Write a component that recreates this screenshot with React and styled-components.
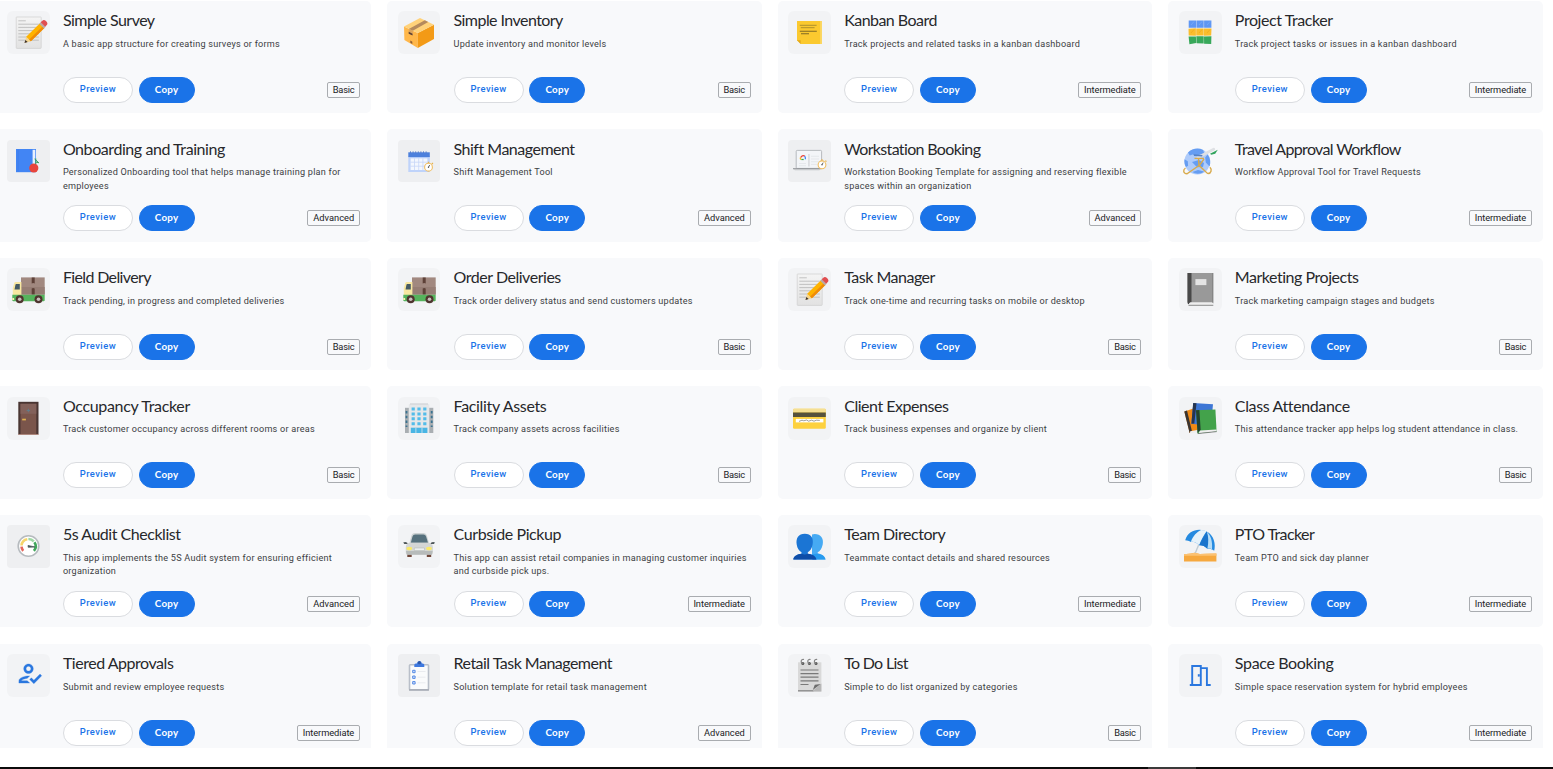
import React from "react";
import styled, { createGlobalStyle } from "styled-components";

const GlobalStyle = createGlobalStyle`
  html, body { margin: 0; padding: 0; background: #fff; overflow: hidden; }
  *, *::before, *::after { box-sizing: border-box; }
`;

const Page = styled.div`
  display: flex;
  flex-direction: column;
  width: 1553px;
  height: 769px;
  overflow: hidden;
  background: #fff;
  font-family: Roboto, "Liberation Sans", sans-serif;
  color: #202124;
`;

const Gallery = styled.main`
  height: 748px;
  overflow: hidden;
`;

const Grid = styled.div`
  display: grid;
  grid-template-columns: repeat(4, 374.6px);
  grid-auto-rows: 112.45px;
  column-gap: 16.07px;
  row-gap: 16.17px;
  margin-left: -3.7px;
  padding-top: 0.6px;
`;

const Card = styled.article`
  display: flex;
  gap: 13.1px;
  padding: 10.5px 10.9px 10px 10.8px;
  background: #f8f9fb;
  border-radius: 5px;
`;

const Tile = styled.div`
  flex: none;
  width: 42.7px;
  height: 42.7px;
  border-radius: ${(p) => (p.$tone === "flat" ? "4px" : "6px")};
  background: ${(p) => ({ soft: "#f2f3f5", flat: "#eeeff1", none: "transparent" })[p.$tone]};

  svg { display: block; width: 43px; height: 43px; }
`;

const Body = styled.div`
  flex: 1;
  min-width: 0;
  display: flex;
  flex-direction: column;
`;

const Title = styled.h3`
  margin: 0;
  height: 18px;
  font: 400 16px/17.6px Lato, "Liberation Sans", sans-serif;
  letter-spacing: ${(p) => p.$track}px;
  white-space: nowrap;
  color: #27282b;
`;

const Description = styled.p`
  margin: 8.5px 0 0;
  height: 38.95px;
  font-size: 9.1px;
  line-height: 13.4px;
  letter-spacing: 0.24px;
  color: #3c4043;
`;

const Footer = styled.div`
  display: flex;
  align-items: center;
  gap: 5.7px;
`;

const Button = styled.button`
  height: 26px;
  width: ${(p) => (p.$primary ? "56.2px" : "70px")};
  padding: 0 0 2px;
  border: 1px solid ${(p) => (p.$primary ? "#1a73e8" : "#dadce0")};
  border-radius: 13px;
  background: ${(p) => (p.$primary ? "#1a73e8" : "#fff")};
  color: ${(p) => (p.$primary ? "#fff" : "#1a73e8")};
  font: ${(p) => (p.$primary ? "700 9.8px" : "500 9.4px")}/12px ${(p) => (p.$primary ? "Lato" : "Roboto")}, sans-serif;
  letter-spacing: ${(p) => (p.$primary ? "0.3px" : "0.45px")};
`;

const Badge = styled.span`
  margin-left: auto;
  height: 16px;
  padding: 0 4.8px;
  border: 1px solid #a9acb0;
  border-radius: 2px;
  font-size: 9.3px;
  line-height: 14px;
  letter-spacing: ${(p) => p.$track}px;
  color: #202124;
`;

const BottomEdge = styled.div`
  display: flex;
  margin-top: auto;
  height: 2px;
  padding-left: 1148px;
  background: #0b0b0b;
`;

const EdgeMark = styled.span`
  width: 48px;
  background: #3a3a3a;
`;

function Stopwatch({ x, y }) {
  return (
    <g transform={`translate(${x} ${y})`}>
      <path d="M0-5.5V-4M3.4-4.2l1 1" stroke="#e8b24a" strokeWidth="1.3" />
      <circle r="3.9" fill="#fff" stroke="#efbd62" strokeWidth="1.1" />
      <path d="M0 0l1.2-2.2" stroke="#555" strokeWidth=".9" />
      <circle r=".7" fill="#555" />
    </g>
  );
}

const Note = () => (
  <>
    <defs>
      <linearGradient id="note-paper" x2="0" y2="1"><stop stopColor="#f4f4f4" /><stop offset="1" stopColor="#e2e2e2" /></linearGradient>
    </defs>
    <rect x="9.2" y="6" width="25" height="31.4" rx=".6" fill="url(#note-paper)" stroke="#cfcfcf" strokeWidth=".7" />
    <path d="M11.3 9.8h7.5" stroke="#bdbdbd" strokeWidth=".9" />
    <path d="M11.3 13.2h20.5M11.3 16.4h20.5M11.3 19.6h20.5M11.3 22.8h20.5M11.3 26h20.5M11.3 29.2h20.5" stroke="#bbb" strokeWidth=".9" />
    <path d="M17.5 32l1.7-6.3 4.6 4.5z" fill="#f6d58c" />
    <path d="M17.5 32l.8-3 2.4 2.1z" fill="#3a3230" />
    <path d="M19.2 25.7L32.7 12.4l4.7 4.5-13.5 13.3z" fill="#ffb300" />
    <path d="M22.2 28.6L35.8 15.3l1.6 1.6-13.5 13.3z" fill="#ef8b09" />
    <path d="M32.2 12.8l1.7-1.6 4.7 4.6-1.7 1.6z" fill="#b9a9a5" />
    <path d="M33.7 11.3l1.6-1.6c1.2-1.2 2.6-.7 3.9.6s1.7 2.7.6 3.8l-1.6 1.7z" fill="#e04e50" />
  </>
);

const Package = () => (
  <>
    <path d="M6 15.6L19.8 22v15L6.4 29z" fill="#ffb74a" />
    <path d="M19.8 22L36 13.8V28L19.8 37z" fill="#f39a16" />
    <path d="M6 15.6L22 6.9l14 6.9L19.8 22z" fill="#ffd27a" />
    <path d="M10.8 17.9l16-8.6 3.4 1.7-15.4 8.8z" fill="#b58a5c" />
    <path d="M10.8 17.9l4 1.9v4.4l-4-1.8z" fill="#dba45d" />
    <path d="M10.7 20.8l3.8 1.9v1.8l-3.8-1.8z" fill="#5c4033" />
    <path d="M12.3 29.6l2 1.1v2.2l-2-1.1z" fill="#8c5b37" />
  </>
);

const Sticky = () => (
  <>
    <path d="M9 10h24.8v23H12.7L9 29.3z" fill="#fbc92f" />
    <path d="M32.2 10h1.6v23h-1.6z" fill="#fcd968" />
    <path d="M9 29.3h3.7V33z" fill="#e3a91c" />
    <path d="M11.8 14.3h16.8M12.8 16.7h13.8" stroke="#a58a2c" strokeWidth=".9" />
    <path d="M11.8 20.3h17M13 22.7h8" stroke="#806a24" strokeWidth="1.1" />
  </>
);

const Blocks = () => (
  <>
    <path d="M9.7 9.6h7.3v7.2h-7.3zM17.4 9.6h7.3v7.2h-7.3zM25.1 9.6h7.3v7.2h-7.3z" fill="#5f97f3" />
    <path d="M9.5 17.7l7.4-.4v7.4l-7.2-.1zM17.2 17.6h7.5v7h-7.5zM25 17.5h7.5l-.3 7-7.2.2z" fill="#fabd2d" />
    <path d="M9.6 25.6l7.3-.2.3 6.7-6.8 1.1zM17.3 25.3h7.4v7.3l-7.1-.3zM25 25.5l7.4-.2-.2 7.7-7.1-.2z" fill="#38a85a" />
    <path d="M12 14l3-3.5M20 14l3-3.5M28 14l3-3.5" stroke="#82b0fa" strokeWidth=".6" />
    <path d="M12 22l3-3.5M20 22l3-3.5M28 22l3-3.5" stroke="#eba51b" strokeWidth=".6" />
  </>
);

const BlueBook = () => (
  <>
    <path d="M9 9h20v23.2H9z" fill="#4285f4" />
    <path d="M25.6 9.8h2.7v18h-2.7z" fill="#e8f0fe" />
    <path d="M11.2 9.5v22" stroke="#3b79e2" strokeWidth=".5" />
    <circle cx="26.8" cy="28" r="4.6" fill="#e8453c" />
    <path d="M28.8 24.2v-5.7M28.8 22l3 .8-3-2.8-1.3-1" stroke="#299a58" strokeWidth=".9" fill="none" />
  </>
);

const Calendar = () => (
  <>
    <path d="M10.3 16h21.5v16H10.3z" fill="#bfd3fa" />
    <path d="M12.6 18.4h16.8v11.6H12.6z" fill="#f4f7fe" />
    <path d="M16.5 18.4V30M20.7 18.4V30M24.9 18.4V30M12.6 22.2h16.8M12.6 26.2h16.8" stroke="#c6d6f8" strokeWidth=".8" />
    <path d="M10.3 12.3h21.5v4.8H10.3z" fill="#4d80dc" />
    <path d="M12 12h18" stroke="#2f5fbd" strokeDasharray="1 1.6" />
    <Stopwatch x={30.5} y={27.2} />
  </>
);

const Laptop = () => (
  <>
    <rect x="8.2" y="10.4" width="25.4" height="18" rx="1" fill="#f3f5f8" stroke="#b0b3b8" strokeWidth=".9" />
    <path d="M20.9 14v12.5" stroke="#dcdee1" strokeWidth="1.8" />
    <path d="M23 16.3h8M23 19h8M23 21.7h8M23 24.4h6M11 23.5h7M11 25.7h7" stroke="#e0e2e6" strokeWidth=".7" />
    <path d="M12.8 17.8a2.4 2.4 0 0 1 4-1.5" stroke="#ea4335" strokeWidth="1.3" fill="none" />
    <path d="M16.6 16.2q1 1.2.8 3" stroke="#4285f4" strokeWidth="1.3" fill="none" />
    <path d="M12.4 17.7q-.4 1.6 1 1.7" stroke="#fbbc04" strokeWidth="1.2" fill="none" />
    <path d="M13.4 19.5h2.3" stroke="#34a853" strokeWidth="1.2" />
    <path d="M5 28.2h28.6v1H5z" fill="#8f9297" />
    <path d="M5.3 29.2h27.5l-1.5 1.1H7z" fill="#bfc1c5" />
    <Stopwatch x={34} y={24.8} />
  </>
);

const Globe = () => (
  <>
    <circle cx="18.3" cy="21.6" r="12.9" fill="#aecbfa" />
    <path d="M9 12.6c4-4 10-5.2 15.2-2.6l1 3.4-8 2-3.5-1-3 1.2zM5.5 19.3l3.3 2 .3 4.5-2 1.3c-1.4-2-2-5-1.6-7.8zM28.6 14.4c2.7 3.4 3.3 8 2 12l-3.8-3.8-.6-5zM13 22l7-2 5 3-1 4-6 .2zM13.5 32l5.5-2 6 1.5c-3 2.5-8 3.2-11.5.5z" fill="#659df2" />
    <path d="M19 17.5L34.7 9.2" stroke="#dfe1e4" strokeWidth="2.8" strokeLinecap="round" />
    <path d="M14.5 14.2l9 .8-.4 1.5-8-.6z" fill="#5582c5" />
    <path d="M31 13.8l7.8-4-2.6 4-4 1z" fill="#31a45d" />
    <path d="M19.5 18.5l.5 7L8 33.8c-4-.2-4.2-4-1.5-5.8M25 19l-4.8 6.6 8.3 7.8c4 .4 4.6-4.1 2.4-6.2M15.5 18.4h9.5" fill="none" stroke="#d8aa4c" strokeWidth="1.4" />
  </>
);

const Truck = () => (
  <>
    <path d="M14 9.4h23.7v17.2H14z" fill="#a1887f" />
    <path d="M14 19h23.7v7.6H14z" fill="#967d74" />
    <path d="M24.7 9.4h3v6l-1.5-.5-1.5.5zM24.7 20.6l1.5-.5 1.5.5v6h-3z" fill="#5d4037" />
    <path d="M5.8 27V20l1.5-5q.3-1 1.3-1h5.8v13z" fill="#f8e7a1" />
    <path d="M7.5 21.5l1-5q.1-.6.7-.6h3.6v5.6z" fill="#455a64" />
    <path d="M5.3 26.7h32.4v5.5q0 1-1 1H6.3q-1 0-1-1z" fill="#55b35c" />
    <path d="M5.3 30h1.8v2H5.3z" fill="#fff3b0" />
    {[12.7, 31.5].map((x) => (
      <g key={x}>
        <circle cx={x} cy="31.2" r="4" fill="#4e342e" />
        <circle cx={x} cy="31.2" r="1.8" fill="#c8c0bd" />
      </g>
    ))}
  </>
);

const Door = () => (
  <>
    <path d="M11.3 4.8h20.2V37H11.3z" fill="#493532" />
    <path d="M13.5 6.8h15.8V37H13.5z" fill="#7a554b" />
    <path d="M13.5 6.8h15.8v10H13.5z" fill="#83615a" />
    <path d="M11.1 37h20.6v.9H11.1z" fill="#a57b70" />
    <path d="M21.4 11.8v3.4M19.7 13.5h3.4" stroke="#5f7d8c" strokeWidth=".9" />
    <path d="M15.2 21.7h3.7v1.7h-3.7z" fill="#e0b250" />
  </>
);

const Building = () => (
  <>
    <path d="M7 10.8h28.3V36H7z" fill="#a9aeb2" />
    <path d="M8.5 14v16M33.7 14v16" stroke="#397290" strokeWidth="1.8" strokeDasharray="2.4 2.4" />
    <path d="M10.8 7.2h20.5V36H10.8z" fill="#e5e7e9" />
    <path d="M12 6.4h18v1.2H12z" fill="#cfd3d6" />
    {[10.5, 15.4, 20.3, 25.2].map((y) => (
      <path key={y} d={`M13.6 ${y}h3.2v3h-3.2zM19.4 ${y}h3.2v3h-3.2zM25.2 ${y}h3.2v3h-3.2z`} fill="#52bce9" />
    ))}
    <path d="M12.8 30.7h16.6V36H12.8z" fill="#49b5e4" />
    <path d="M17.9 30.7V36M24 30.7V36" stroke="#d5e7ef" strokeWidth=".8" />
  </>
);

const CreditCard = () => (
  <>
    <rect x="5" y="11.7" width="32.8" height="20" rx="1.2" fill="#fdd13f" />
    <path d="M6.2 11.7h30.4q1.2 0 1.2 1.2v2.5H5v-2.5q0-1.2 1.2-1.2z" fill="#f5df94" />
    <path d="M5 15.4h32.8v4.5H5z" fill="#56513c" />
    <path d="M7.8 21.9h27.6v3.5H7.8z" fill="#fff" />
    <path d="M11 24.4l3-1.2 1.8.6 2.8-.8 2 1.2 3-1 2.4 1 2.3-1 3.5.2" fill="none" stroke="#777" strokeWidth=".7" />
  </>
);

const Notebook = () => (
  <>
    <path d="M8.5 5h25.7v31H11q-2.5 0-2.5-2z" fill="#999" />
    <path d="M8.5 5h4v29.4q-2 0-2.7 1.9-1.3-.2-1.3-2z" fill="#484848" />
    <path d="M11.5 34.2h22.7v2.9H11.3q-2.8-1.3.2-2.9z" fill="#eee" />
    <path d="M9.5 37.3h24.8" stroke="#707070" strokeWidth=".8" />
    <path d="M16.4 11.1h11v6h-11z" fill="#e4e4e4" />
    <path d="M33.8 5v30" stroke="#777" strokeWidth=".8" />
  </>
);

const Books = () => (
  <>
    <path d="M5.3 14.6l10-3.4 7 22-11.6 2.7z" fill="#f18a14" />
    <path d="M5.3 14.6l2.7-1 4.9 20.3-2.3 2z" fill="#393431" />
    <path d="M11.2 34.3l11-2 .3 2-11.6 2.2z" fill="#eee" />
    <path d="M14.2 6L34 7.3 32 29l-19.6-2.3z" fill="#3d76d5" />
    <path d="M14.2 6l3.3.2-2.2 20.4-2.9.1z" fill="#27354e" />
    <path d="M17 13.3l19.4-.8 1.2 22-19 1.9z" fill="#43a24b" />
    <path d="M17 13.3l3.4-.2 1.3 20.4q-2.3.8-3.1 2.8z" fill="#24412e" />
    <path d="M21 33.6l16.5-1.2.1 2.2-18 1.6z" fill="#efefef" />
    <path d="M18.8 36.6l18.9-2" stroke="#444" strokeWidth=".6" />
  </>
);

const Gauge = () => (
  <>
    <circle cx="21.5" cy="21" r="10.3" fill="#fff" stroke="#b6bbbf" strokeWidth="1.6" />
    <g fill="none" strokeWidth="2.6">
      <path d="M16.2 25.8a7 7 0 0 1-1.7-4.1" stroke="#e5675c" />
      <path d="M14.5 20.5a7 7 0 0 1 5.8-6.3" stroke="#f6d56b" />
      <path d="M21.4 14a7 7 0 0 1 5.4 2.4" stroke="#9ed8a4" />
      <path d="M27.4 17.2a7 7 0 0 1-.5 8.6" stroke="#3fa65a" />
    </g>
    <path d="M21 20.4l7 1.6-6.8.3z" fill="#455" stroke="#455" strokeWidth=".7" />
  </>
);

const Car = () => (
  <>
    <path d="M9.3 28h4.4v4H9.3zM28.8 28h4.4v4h-4.4z" fill="#714638" />
    <path d="M11.5 18l1.8-7q.8-3 4-3H25q3.2 0 4 3l2 7z" fill="#cdd2d3" />
    <path d="M12.8 17.8l1.7-6.3q.6-2 2.6-2h8.4q2 0 2.6 2l1.9 6.3z" fill="#56717d" />
    <path d="M7.8 22q.5-4.2 4.4-4.2h18.2q4 0 4.5 4.2v5.8q0 1.8-1.8 1.8H9.5q-1.7 0-1.7-1.8z" fill="#d4d6d5" />
    <path d="M8 26h26.6l-.6 3.7H8.7z" fill="#b7bbba" />
    <path d="M5.2 17.6q2-1.5 4 .2l.3 1.1H6.3zM37 17.6q-2-1.5-4 .2l-.3 1.1h3.2z" fill="#4d5558" />
    <ellipse cx="11.3" cy="23.5" rx="2.9" ry="1.8" fill="#fae969" />
    <ellipse cx="31" cy="23.5" rx="2.9" ry="1.8" fill="#fae969" />
    <path d="M16.3 23h10.2v2.5H16.3z" fill="#edf0ef" stroke="#aeb2b1" strokeWidth=".5" />
  </>
);

const People = () => (
  <>
    <path d="M26.7 9c6 0 9.3 4.5 8 10.5-.8 4.2-2.6 6.7-5 7.8v1.5c3.8.6 6.8 2.1 7.8 5.6H24V9.5z" fill="#46aaf3" />
    <path d="M24 29.5l5.8-1c4 .8 6.7 2.2 7.7 5.9H25z" fill="#279bef" />
    <path d="M16.8 8.7c6.3 0 9 4.5 7.8 10.8-.7 4-2.5 6.5-4.8 7.7v1.6c3.7.4 7.6 2 8.6 5.6H5.3c.8-3.7 4.3-5 8.2-5.6v-1.5c-2.5-1.3-4.2-4-4.8-7.8-1-6.3 1.8-10.8 8.1-10.8z" fill="#1b75d4" />
    <path d="M5.3 34.4c.8-3.7 4.3-5 8.2-5.6q3.2 1.3 6.3 0c3.7.4 7.6 2 8.6 5.6z" fill="#0e4da8" />
  </>
);

const Beach = () => (
  <>
    <path d="M22.8 12.2L15.5 30" stroke="#c1ccd3" strokeWidth="1.4" />
    <path d="M6.2 15.2C9.3 4.3 21.3 2.3 29 7.2c5.6 3.5 8 11.7 6.2 18.5-2.4-1.9-4.5-2.2-6.8-2-2.8-2.8-5.4-3.8-8.2-3.5-3-2.8-5.8-3.8-8.3-3.2-1.8-1.2-3.7-1.7-5.7-1.8z" fill="#258ae0" />
    <path d="M11.8 17C14 11 18 6.6 22.2 5q3 .1 5.4 1.3c-3.3 4.6-5.8 9.6-7.4 13.9-3-2.8-5.8-3.8-8.4-3.2z" fill="#e6f2fa" />
    <path d="M27.8 6.5c-3 4.8-5.4 9.5-7.6 13.7 2.8-.3 5.6.8 8.2 3.5 1.2-6.1 1-12.9-.6-17.2z" fill="#1974cc" />
    <path d="M27.8 6.5c1.8 4.4 1.9 11 .6 17.2 2-.3 3.7 0 4.6.5.7-7.4-1-13.6-5.2-17.7z" fill="#b6dcf5" />
    <path d="M5 29.2l7-.6 3.5-.8 5.4 1.2 6-.3 10.5-.2v8H5z" fill="#f6a83e" />
    <path d="M5 29.2l7-.6 3.5-.8 5.4 1.2 6-.3 10.5-.2v2.2H5z" fill="#fcc273" />
  </>
);

const Approve = () => (
  <g transform="translate(8.3 5.1) scale(1.2)">
    <path fill="#2a77df" d="M11 12c2.21 0 4-1.79 4-4s-1.79-4-4-4-4 1.79-4 4 1.79 4 4 4zm0-6c1.1 0 2 .9 2 2s-.9 2-2 2-2-.9-2-2 .9-2 2-2zM5 18c.2-.63 2.57-1.68 4.96-1.94l2.04-2c-.39-.04-.68-.06-1-.06-2.67 0-8 1.34-8 4v2h9l-2-2H5zm15.6-5.5l-5.13 5.17-2.07-2.08L12 17l3.47 3.5L22 13.91z" stroke="#2a77df" strokeWidth=".25" />
  </g>
);

const Clipboard = () => (
  <>
    <rect x="11.5" y="10.8" width="19" height="25" rx=".8" fill="#fafbfc" stroke="#b9bfc9" strokeWidth="1.6" />
    <path d="M11 36h20" stroke="#9ea4ae" strokeWidth="1.2" />
    <path d="M16.3 13v-2q0-1.5 1.5-1.5h1q.5-2.2 2.6-2.2T24 9.5h.8q1.5 0 1.5 1.5v2z" fill="#3f79df" />
    <circle cx="21.4" cy="8.7" r="1.6" fill="#2b57a9" />
    <path d="M14.7 16.3h2.4v2.4h-2.4zM14.7 22h2.4v2.4h-2.4zM14.7 27.6h2.4V30h-2.4z" fill="#d6e4fc" stroke="#5489e4" />
    <path d="M19.5 17.5h8M19.5 23.2h8M19.5 28.8h8" stroke="#e9ebef" />
  </>
);

const Pad = () => (
  <>
    <path d="M10 8.3h23.4v29.3H10z" fill="#d9d9d9" />
    <path d="M10 36.8h15.5" stroke="#888" strokeWidth="1.3" />
    <path d="M33.4 29.6v8h-9.3z" fill="#b7b7b7" />
    <path d="M24.8 36l2-5.2 5.8-.8z" fill="#6d6d6d" />
    <path d="M12.5 16h18M12.5 19.6h18M12.5 23.2h18M12.5 26.8h18M12.5 30.5h8" stroke="#797979" strokeWidth="1.2" />
    {[14.8, 21.4, 28].map((x) => (
      <g key={x}>
        <circle cx={x} cy="9.6" r="1.5" fill="#555" />
        <path d={`M${x + 1.2} 5.5c-3.4-1-3.8 3.6-.8 4`} fill="none" stroke="#858585" strokeWidth="1.2" />
      </g>
    ))}
  </>
);

/* Half-open double door: two frames, a base line on each side and a knob. */
const Room = () => (
  <g fill="none" stroke="#2a77df" strokeWidth="1.9">
    <path d="M10.8 31h11V12h-8.6v19" />
    <path d="M21.8 14.1h6.1V31h3.8" />
    <path d="M18.8 20.2h2v2.4h-2z" fill="#2a77df" stroke="none" />
  </g>
);

const templates = [
  { title: "Simple Survey", track: -0.54, text: "A basic app structure for creating surveys or forms", level: "Basic", Icon: Note },
  { title: "Simple Inventory", track: -0.56, text: "Update inventory and monitor levels", level: "Basic", Icon: Package },
  { title: "Kanban Board", track: -0.54, text: "Track projects and related tasks in a kanban dashboard", level: "Intermediate", Icon: Sticky },
  { title: "Project Tracker", track: -0.43, text: "Track project tasks or issues in a kanban dashboard", level: "Intermediate", Icon: Blocks },
  { title: "Onboarding and Training", track: -0.43, text: "Personalized Onboarding tool that helps manage training plan for employees", level: "Advanced", Icon: BlueBook, tone: "flat" },
  { title: "Shift Management", track: -0.5, text: "Shift Management Tool", level: "Advanced", Icon: Calendar, tone: "flat" },
  { title: "Workstation Booking", track: -0.65, text: "Workstation Booking Template for assigning and reserving flexible spaces within an organization", level: "Advanced", Icon: Laptop, tone: "flat" },
  { title: "Travel Approval Workflow", track: -0.65, text: "Workflow Approval Tool for Travel Requests", level: "Intermediate", Icon: Globe, tone: "none" },
  { title: "Field Delivery", track: -0.64, text: "Track pending, in progress and completed deliveries", level: "Basic", Icon: Truck },
  { title: "Order Deliveries", track: -0.47, text: "Track order delivery status and send customers updates", level: "Basic", Icon: Truck },
  { title: "Task Manager", track: -0.5, text: "Track one-time and recurring tasks on mobile or desktop", level: "Basic", Icon: Note },
  { title: "Marketing Projects", track: -0.47, text: "Track marketing campaign stages and budgets", level: "Basic", Icon: Notebook },
  { title: "Occupancy Tracker", track: -0.33, text: "Track customer occupancy across different rooms or areas", level: "Basic", Icon: Door },
  { title: "Facility Assets", track: -0.33, text: "Track company assets across facilities", level: "Basic", Icon: Building },
  { title: "Client Expenses", track: -0.47, text: "Track business expenses and organize by client", level: "Basic", Icon: CreditCard },
  { title: "Class Attendance", track: -0.37, text: "This attendance tracker app helps log student attendance in class.", level: "Basic", Icon: Books },
  { title: "5s Audit Checklist", track: -0.47, text: "This app implements the 5S Audit system for ensuring efficient organization", level: "Advanced", Icon: Gauge, tone: "flat" },
  { title: "Curbside Pickup", track: -0.4, text: "This app can assist retail companies in managing customer inquiries and curbside pick ups.", level: "Intermediate", Icon: Car },
  { title: "Team Directory", track: -0.46, text: "Teammate contact details and shared resources", level: "Intermediate", Icon: People },
  { title: "PTO Tracker", track: -0.6, text: "Team PTO and sick day planner", level: "Intermediate", Icon: Beach },
  { title: "Tiered Approvals", track: -0.47, text: "Submit and review employee requests", level: "Intermediate", Icon: Approve },
  { title: "Retail Task Management", track: -0.52, text: "Solution template for retail task management", level: "Advanced", Icon: Clipboard, tone: "flat" },
  { title: "To Do List", track: -0.7, text: "Simple to do list organized by categories", level: "Basic", Icon: Pad },
  { title: "Space Booking", track: -0.35, text: "Simple space reservation system for hybrid employees", level: "Intermediate", Icon: Room },
];

const levelTrack = { Basic: -0.28, Advanced: 0, Intermediate: -0.08 };

function TemplateCard({ title, text, level, Icon, tone = "soft", track }) {
  return (
    <Card>
      <Tile $tone={tone}>
        <svg viewBox="0 0 43 43" aria-hidden="true"><Icon /></svg>
      </Tile>
      <Body>
        <Title $track={track}>{title}</Title>
        <Description>{text}</Description>
        <Footer>
          <Button>Preview</Button>
          <Button $primary>Copy</Button>
          <Badge $track={levelTrack[level]}>{level}</Badge>
        </Footer>
      </Body>
    </Card>
  );
}

export default function App() {
  return (
    <Page>
      <GlobalStyle />
      <Gallery>
        <Grid>
          {templates.map((t) => <TemplateCard key={t.title} {...t} />)}
        </Grid>
      </Gallery>
      <BottomEdge><EdgeMark /></BottomEdge>
    </Page>
  );
}
